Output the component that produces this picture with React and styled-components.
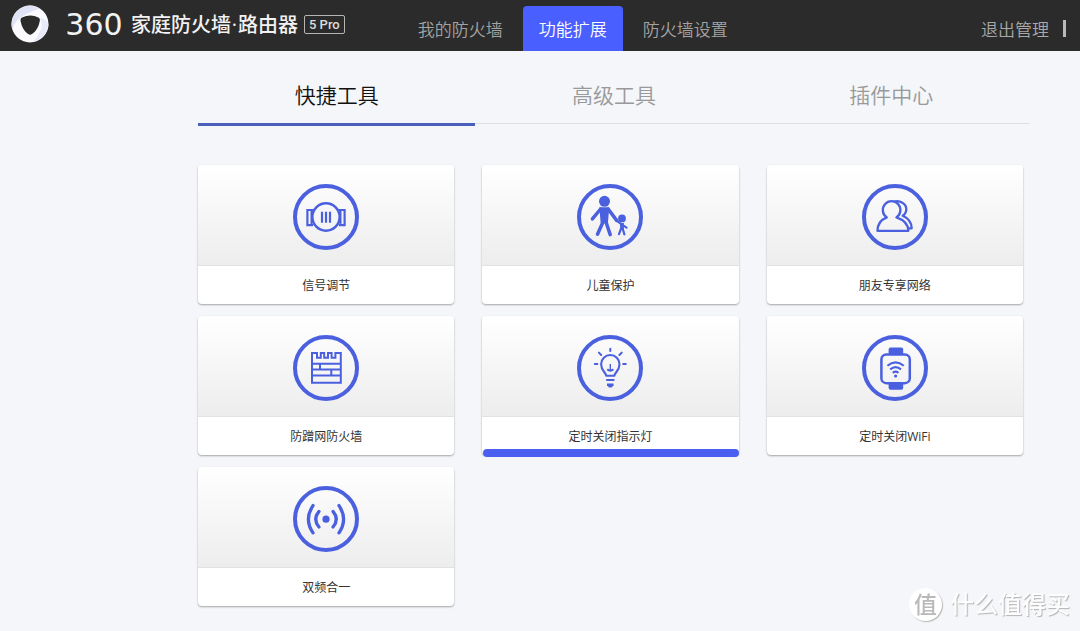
import { useState } from "react";
import styled, { createGlobalStyle } from "styled-components";

const NAV = ["我的防火墙", "功能扩展", "防火墙设置"];
const TABS = ["快捷工具", "高级工具", "插件中心"];

const SignalIcon = () => (
  <RingIcon>
    <circle cx="33" cy="33" r="13.7" strokeWidth="2.6" />
    <path d="M20 26h-5.6v15.2h5.6M46 26h5.6v15.2H46" strokeWidth="2.2" />
    <path d="M18.4 27v13M47.6 27v13" strokeWidth="1.8" />
    <path d="M29 27.7v11M33 27.7v11M37 27.7v11" strokeWidth="2.2" />
  </RingIcon>
);

const ChildIcon = () => (
  <RingIcon>
    <g fill={BLUE} stroke="none">
      <circle cx="27.5" cy="17.3" r="5.5" />
      <path d="M22.3 23.2h10l-1.400 16h-7.200z" />
      <circle cx="45" cy="34.4" r="3.9" />
    </g>
    <path
      d="M23.600 25l-8.200 9.800M31.200 25l8.400 11.400M26 38l-5.500 12.200M29 38l4.200 12.600"
      strokeWidth="3.5"
      strokeLinecap="round"
    />
    <path
      d="M39.600 36.600l5 3.800 5 3.200M43.900 45l-1.900 5.200M45.800 45l1.600 5.400"
      strokeWidth="2.2"
      strokeLinecap="round"
    />
    <path d="M45 39v6.500" strokeWidth="3.8" />
  </RingIcon>
);

const FriendsIcon = () => (
  <RingIcon>
    <g strokeWidth="2.3" strokeLinejoin="round">
      <path d="M15.4 46.8c.2-6.8 3-10.8 9.4-13.4a8.8 8.8 0 1 1 9.6 0c7.2 2.4 11.8 6.4 12 13.4z" />
      <path d="M32.2 17.6c6-1.4 11.9 1.8 12.1 7.4.1 2.8-1.2 5.2-3.6 6.8 5.6 2.4 8.8 6 9 12.6h-3.4" />
    </g>
  </RingIcon>
);

const WallIcon = () => (
  <RingIcon>
    <path
      d="M19 47.8V18h5v4.8h3.8V18h3.4v4.8H35V18h3.6v4.8h3.8V18h5.4v29.8z"
      strokeWidth="2"
    />
    <path
      d="M19 28.8h29M19 34.6h29M19 40.5h29M27 28.8v5.8M38.3 34.6v5.9"
      strokeWidth="2"
    />
  </RingIcon>
);

const BulbIcon = () => (
  <RingIcon>
    <path
      d="M29.2 40.8c-.1-3-5.1-5.2-5.1-11.600a9.200 9.200 0 0 1 18.400 0c0 6.400-5 8.600-5.100 11.600z"
      strokeWidth="2.1"
      strokeLinejoin="round"
    />
    <path d="M29.2 45h8.2" strokeWidth="2" />
    <path d="M30 48.600h6.600v1.600l-2 2.400H32l-2-2.400z" fill={BLUE} stroke="none" />
    <path
      d="M33.3 13.800v2.200M17.800 29h2.600M46.200 29h2.600M21.900 17.600l2.300 2.400M44.700 17.600L42.400 20"
      strokeWidth="2"
      strokeLinecap="round"
    />
    <path d="M33.3 29v6" strokeWidth="1.4" />
    <path d="M30.2 34.400q3.100 2.400 6.200 0" strokeWidth="2" />
  </RingIcon>
);

const WatchIcon = () => (
  <RingIcon>
    <rect x="19.4" y="19.4" width="28.4" height="28.8" rx="5" strokeWidth="2.5" />
    <path
      d="M28.6 12.6h10.6a2 2 0 0 1 2 2v4.8H26.6v-4.8a2 2 0 0 1 2-2zM26.6 48.2h14.6v4.6a2 2 0 0 1-2 2H28.6a2 2 0 0 1-2-2z"
      fill={BLUE}
      stroke="none"
    />
    <path
      d="M25.400 30.800q8.200-6.800 16.400 0M28.200 34.400q5.400-4.600 10.800 0M30.800 37.800q2.800-2.200 5.600 0"
      strokeWidth="2.1"
    />
    <circle cx="33.6" cy="41" r="1.6" fill={BLUE} stroke="none" />
  </RingIcon>
);

const DualBandIcon = () => (
  <RingIcon>
    <circle cx="33" cy="33.2" r="3.6" fill={BLUE} stroke="none" />
    <g strokeWidth="3.3" strokeLinecap="round">
      <path d="M26 25.4q-6.600 7.800 0 15.600M40 25.400q6.600 7.800 0 15.600" />
      <path d="M20 19.600q-9.200 13.600 0 27.200M46 19.600q9.200 13.600 0 27.200" />
    </g>
  </RingIcon>
);

const TOOLS = [
  { name: "信号调节", Icon: SignalIcon },
  { name: "儿童保护", Icon: ChildIcon },
  { name: "朋友专享网络", Icon: FriendsIcon },
  { name: "防蹭网防火墙", Icon: WallIcon },
  { name: "定时关闭指示灯", Icon: BulbIcon },
  { name: "定时关闭WiFi", Icon: WatchIcon },
  { name: "双频合一", Icon: DualBandIcon },
];

const App = () => {
  const [page, setPage] = useState("功能扩展");
  const [tab, setTab] = useState("快捷工具");
  const [tool, setTool] = useState("定时关闭指示灯");

  return (
    <>
      <GlobalStyle />
      <Header>
        <Brand>
          <ShieldLogo />
          <BrandNumber>360</BrandNumber>
          <BrandName>
            家庭防火墙<BrandDot>·</BrandDot>路由器
          </BrandName>
          <Model>5 Pro</Model>
        </Brand>
        <Nav>
          {NAV.map((item) => (
            <NavButton
              key={item}
              $active={item === page}
              onClick={() => setPage(item)}
            >
              {item}
            </NavButton>
          ))}
        </Nav>
        <Logout>退出管理</Logout>
      </Header>
      <Content>
        <TabList role="tablist">
          {TABS.map((item) => (
            <Tab
              key={item}
              role="tab"
              aria-selected={item === tab}
              $active={item === tab}
              onClick={() => setTab(item)}
            >
              {item}
            </Tab>
          ))}
        </TabList>
        <ToolGrid>
          {TOOLS.map(({ name, Icon }) => (
            <ToolCard
              key={name}
              $active={name === tool}
              onClick={() => setTool(name)}
            >
              <IconPanel>
                <Icon />
              </IconPanel>
              <ToolName>{name}</ToolName>
            </ToolCard>
          ))}
        </ToolGrid>
      </Content>
      <Watermark>
        <WatermarkBadge>值</WatermarkBadge>
        什么值得买
      </Watermark>
    </>
  );
};

export default App;

const BLUE = "#4b60df";

function RingIcon({ children }) {
  return (
    <IconSvg viewBox="0 0 66 66" aria-hidden="true">
      <circle cx="33" cy="33" r="31" strokeWidth="4" />
      {children}
    </IconSvg>
  );
}

function ShieldLogo() {
  return (
    <LogoSvg viewBox="0 0 38 38" aria-hidden="true">
      <circle cx="19" cy="19" r="18.5" fill="#fbfbff" />
      <path
        d="M19 .5C9 .5.5 9 .5 19c0 2 .3 4 1 5.800C3 17 9 10 29 3.500 26 1.500 22 .5 19 .5z"
        fill="#e0e2f6"
      />
      <path
        d="M28 13c5 5 3 14-6 24 8-1.500 15-9 15.400-17C37 16 33 13 28 13z"
        fill="#e8eaf9"
      />
      <path
        d="M11 12.400q8.600-4 16.400 0c1.500.8 1.700 2 1.300 4-1.100 5.600-3.600 9.600-7.600 12.600-1.400 1-2.600 1-4 0-3.900-3-6.400-7-7.400-12.600-.4-2-.2-3.200 1.300-4z"
        fill="#2b2b2b"
      />
    </LogoSvg>
  );
}

const GlobalStyle = createGlobalStyle`
  * {
    box-sizing: border-box;
  }

  body {
    margin: 0;
    background-color: #f4f6f9;
    font-family: "Open Sans", "Noto Sans CJK SC", sans-serif;
  }

  button {
    padding: 0;
    border: 0;
    background: none;
    font-family: inherit;
    font-weight: 350;
    cursor: pointer;
  }
`;

const Header = styled.header`
  display: flex;
  align-items: flex-end;
  height: 51px;
  padding: 0 14px 0 11px;
  background-color: #2b2b2b;
`;

const Brand = styled.div`
  display: flex;
  align-items: center;
  height: 51px;
  padding-bottom: 3px;
  color: #f2f2f2;
`;

const LogoSvg = styled.svg`
  width: 38px;
  height: 38px;
  margin-right: 8px;
`;

const BrandNumber = styled.span`
  width: 74px;
  padding-top: 2px;
  font-family: "DejaVu Sans", sans-serif;
  font-size: 30px;
  line-height: 38px;
  text-align: center;
`;

const BrandName = styled.span`
  display: flex;
  padding-top: 2px;
  font-size: 20px;
  font-weight: 500;
  line-height: 38px;
`;

const BrandDot = styled.span`
  width: 7px;
  text-align: center;
`;

const Model = styled.span`
  margin-left: 6px;
  padding: 0 4px;
  border: 1px solid #b5b5b5;
  border-radius: 2px;
  font-family: Roboto, sans-serif;
  font-size: 13px;
  font-weight: 500;
  line-height: 17px;
  color: #dcdcdc;
`;

const Nav = styled.nav`
  display: flex;
  gap: 4px;
  margin-left: 57px;
`;

const NavButton = styled.button`
  height: 45px;
  padding: 0 16px;
  border-radius: 4px 4px 0 0;
  font-size: 17px;
  color: ${({ $active }) => ($active ? "#ffffff" : "#a3a3a3")};
  background-color: ${({ $active }) => ($active ? "#4a5fff" : "transparent")};
`;

const Logout = styled.button`
  display: flex;
  align-items: center;
  height: 45px;
  margin-left: auto;
  font-size: 17px;
  color: #a9a9a9;

  &::after {
    content: "";
    width: 3px;
    height: 17px;
    margin-left: 14px;
    background-color: #b9b9b9;
  }
`;

const Content = styled.main`
  padding: 0 50px 24px 198px;
`;

const TabList = styled.div`
  display: flex;
  align-items: flex-start;
  height: 75px;
`;

const Tab = styled.button`
  flex: 1;
  padding: 29px 0 13px;
  border-bottom: ${({ $active }) =>
    $active ? "3px solid #4a5fbc" : "1px solid #dcdfe4"};
  font-size: 21px;
  line-height: 30px;
  color: ${({ $active }) => ($active ? "#111111" : "#999999")};
`;

const ToolGrid = styled.div`
  display: grid;
  grid-template-columns: repeat(3, 1fr);
  gap: 12px 28px;
  padding: 39px 7px 0 0;
`;

const ToolCard = styled.button`
  position: relative;
  border-radius: 4px;
  background-color: #ffffff;
  box-shadow: 0 1px 2px #00000055;

  &::after {
    content: "";
    display: ${({ $active }) => ($active ? "block" : "none")};
    position: absolute;
    right: 0;
    bottom: -2px;
    left: 1px;
    height: 8px;
    border-radius: 4px;
    background-color: #4a5ff0;
  }
`;

const IconPanel = styled.span`
  display: flex;
  justify-content: center;
  height: 101px;
  padding-top: 19px;
  border-bottom: 1px solid #e2e2e2;
  border-radius: 4px 4px 0 0;
  background: linear-gradient(#ffffff, #ededed);
`;

const IconSvg = styled.svg`
  width: 66px;
  height: 66px;
  fill: none;
  stroke: ${BLUE};
`;

const ToolName = styled.span`
  display: block;
  padding-top: 2px;
  font-size: 12px;
  font-weight: 400;
  line-height: 36px;
  color: #333333;
`;

const Watermark = styled.div`
  position: fixed;
  right: 10px;
  bottom: 10px;
  display: flex;
  align-items: center;
  gap: 8px;
  font-size: 24px;
  font-weight: 500;
  line-height: 34px;
  color: #fdfdfd;
  text-shadow: 1px 1px 1px #b4b4b4;
  pointer-events: none;
`;

const WatermarkBadge = styled.span`
  width: 33px;
  height: 33px;
  border-radius: 50%;
  font-size: 23px;
  line-height: 32px;
  text-align: center;
  color: #b9b9b9;
  text-shadow: none;
  background-color: #ffffff;
  box-shadow: 1px 1px 1px #b9b9b9;
`;
